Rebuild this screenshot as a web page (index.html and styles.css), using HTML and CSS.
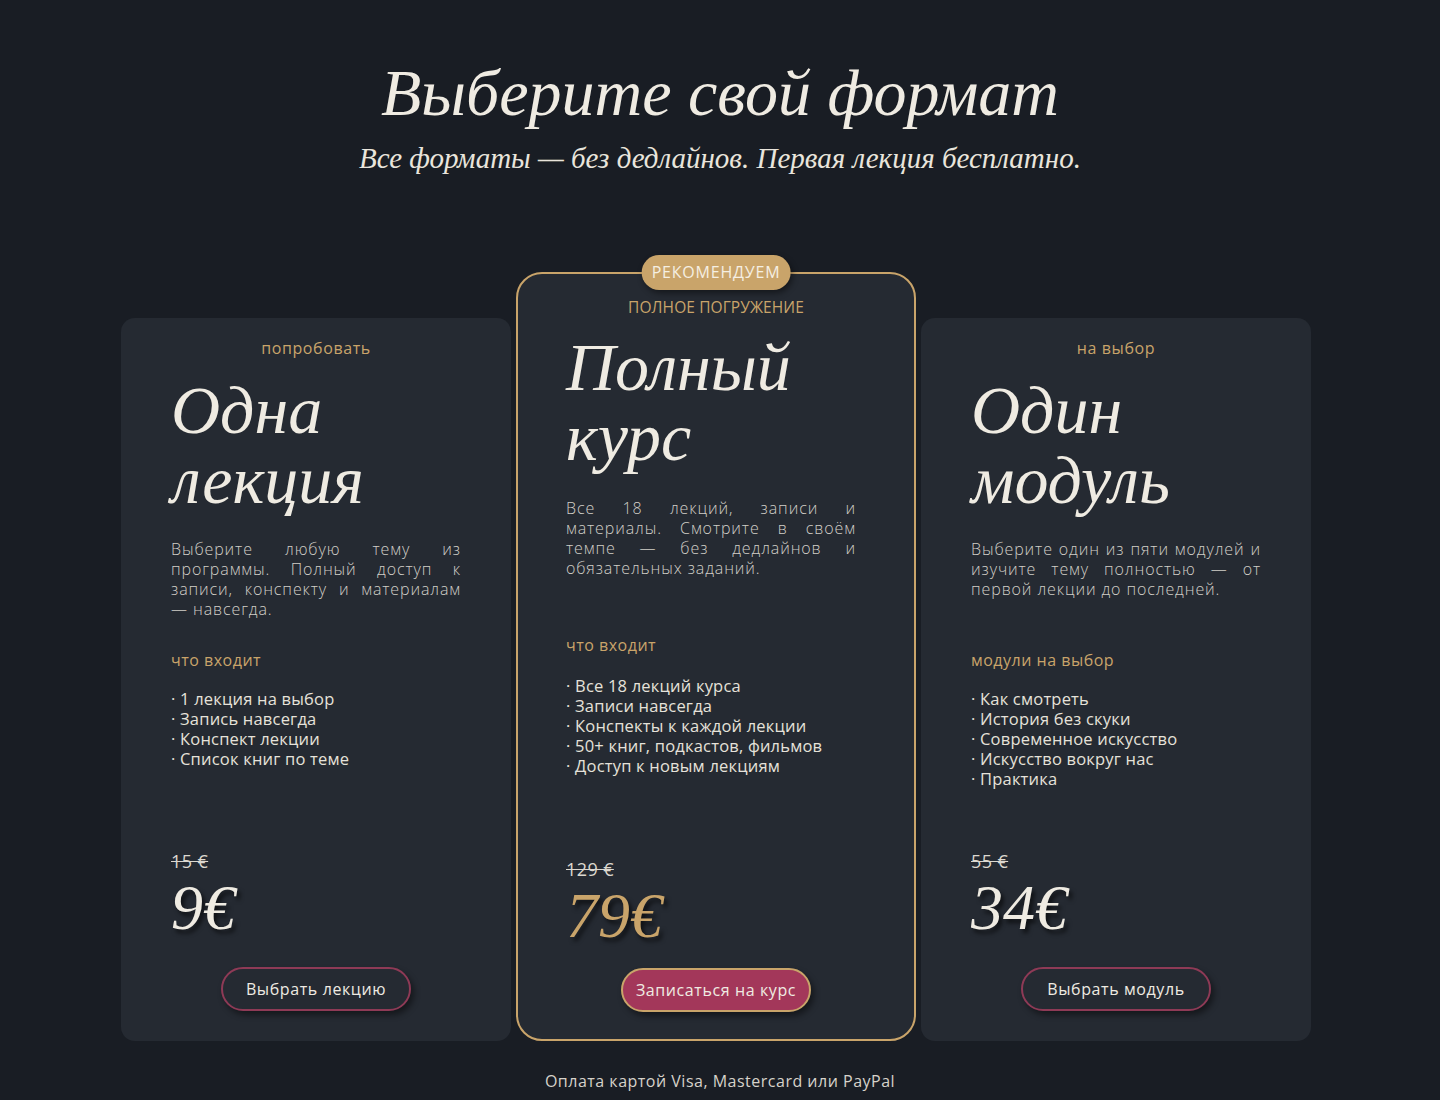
FILE: index.html
```html
<!DOCTYPE html>
<html lang="ru">
<head>
<meta charset="utf-8">
<title>Выберите свой формат</title>
<link rel="stylesheet" href="styles.css">
</head>
<body>
<main class="page">
  <header class="hero">
    <h1 class="hero-title">Выберите свой формат</h1>
    <p class="hero-sub">Все форматы — без дедлайнов. Первая лекция бесплатно.</p>
  </header>

  <section class="plans">
    <article class="plan">
      <div class="plan-kicker">попробовать</div>
      <h2 class="plan-title">Одна<br>лекция</h2>
      <p class="plan-desc">Выберите любую тему из программы. Полный доступ к записи, конспекту и материалам —&nbsp;навсегда.</p>
      <div class="plan-label">что входит</div>
      <ul class="plan-list">
        <li>· 1 лекция на выбор</li>
        <li>· Запись навсегда</li>
        <li>· Конспект лекции</li>
        <li>· Список книг по теме</li>
      </ul>
      <div class="plan-price">
        <div class="price-old">15 €</div>
        <div class="price-new">9€</div>
      </div>
      <div class="plan-action"><button class="btn">Выбрать лекцию</button></div>
    </article>

    <article class="plan plan-featured">
      <div class="badge">РЕКОМЕНДУЕМ</div>
      <div class="plan-kicker plan-kicker-upper">ПОЛНОЕ ПОГРУЖЕНИЕ</div>
      <h2 class="plan-title">Полный<br>курс</h2>
      <p class="plan-desc">Все 18 лекций, записи и материалы. Смотрите в своём темпе — без дедлайнов и обязательных заданий.</p>
      <div class="plan-label">что входит</div>
      <ul class="plan-list">
        <li>· Все 18 лекций курса</li>
        <li>· Записи навсегда</li>
        <li>· Конспекты к каждой лекции</li>
        <li>· 50+ книг, подкастов, фильмов</li>
        <li>· Доступ к новым лекциям</li>
      </ul>
      <div class="plan-price">
        <div class="price-old">129 €</div>
        <div class="price-new price-gold">79€</div>
      </div>
      <div class="plan-action"><button class="btn btn-primary">Записаться на курс</button></div>
    </article>

    <article class="plan">
      <div class="plan-kicker">на выбор</div>
      <h2 class="plan-title">Один<br>модуль</h2>
      <p class="plan-desc">Выберите один из пяти модулей и изучите тему полностью — от первой лекции до последней.</p>
      <div class="plan-label">модули на выбор</div>
      <ul class="plan-list">
        <li>· Как смотреть</li>
        <li>· История без скуки</li>
        <li>· Современное искусство</li>
        <li>· Искусство вокруг нас</li>
        <li>· Практика</li>
      </ul>
      <div class="plan-price">
        <div class="price-old">55 €</div>
        <div class="price-new">34€</div>
      </div>
      <div class="plan-action"><button class="btn">Выбрать модуль</button></div>
    </article>
  </section>

  <footer class="pay-note">Оплата картой Visa, Mastercard или PayPal</footer>
</main>
</body>
</html>
```

FILE: styles.css
```css
* { box-sizing: border-box; }

html, body {
  margin: 0;
  padding: 0;
  background: #191d24;
}

body {
  font-family: "Open Sans", "DejaVu Sans", sans-serif;
  color: #e8e4dc;
  height: 1100px;
  overflow: hidden;
}

.page {
  width: 100%;
  padding-top: 52px;
}

.hero {
  text-align: center;
}

.hero-title {
  margin: 0;
  font-family: "Liberation Serif", "DejaVu Serif", serif;
  font-style: italic;
  font-weight: 400;
  font-size: 66px;
  line-height: 82px;
  color: #efebe2;
}

.hero-sub {
  margin: 6px 0 0;
  font-family: "Liberation Serif", "DejaVu Serif", serif;
  font-style: italic;
  font-size: 29px;
  line-height: 36px;
  color: #e9e5dc;
}

.plans {
  display: flex;
  justify-content: center;
  align-items: stretch;
  gap: 5px;
  margin-top: 96px;
  padding-right: 8px;
}

.plan {
  position: relative;
  width: 390px;
  margin-top: 46px;
  padding: 20px 50px 30px;
  background: #252a32;
  border-radius: 14px;
  display: flex;
  flex-direction: column;
}

.plan-featured {
  width: 400px;
  min-height: 769px;
  margin-top: 0;
  padding: 23px 58px 27px 48px;
  border: 2px solid #c9a46a;
  border-radius: 26px;
}

.badge {
  position: absolute;
  top: -19px;
  left: 50%;
  transform: translateX(-50%);
  padding: 0 10px;
  height: 35px;
  line-height: 35px;
  border-radius: 18px;
  background: #c9a46a;
  color: #f5efe2;
  font-size: 16px;
  letter-spacing: 0.8px;
  white-space: nowrap;
  box-shadow: 2px 3px 6px rgba(0, 0, 0, 0.45);
}

.plan-kicker {
  text-align: center;
  font-size: 16px;
  line-height: 20px;
  letter-spacing: 0.6px;
  color: #c9a46a;
}

.plan-featured .plan-kicker {
  margin-left: 10px;
}

.plan-kicker-upper {
  font-size: 15.5px;
  letter-spacing: 0.1px;
}

.plan-title {
  margin: 17px 0 0;
  font-family: "Liberation Serif", "DejaVu Serif", serif;
  font-style: italic;
  font-weight: 400;
  font-size: 68px;
  line-height: 70px;
  color: #efebe2;
}

.plan-featured .plan-title {
  margin-top: 15px;
}

.plan-desc {
  margin: 24px 0 0;
  min-height: 80px;
  font-size: 16px;
  line-height: 20px;
  font-weight: 300;
  text-align: justify;
  color: #d2cfc8;
  letter-spacing: 0.9px;
}

.plan-featured .plan-desc {
  margin-top: 26px;
}

.plan-label {
  margin-top: 31px;
  font-size: 16px;
  line-height: 20px;
  letter-spacing: 0.5px;
  color: #c9a46a;
}

.plan-featured .plan-label {
  margin-top: 57px;
}

.plan-list {
  list-style: none;
  margin: 19px 0 0;
  padding: 0;
  font-size: 16.5px;
  line-height: 20px;
  color: #e6e2da;
  letter-spacing: 0.2px;
}

.plan-featured .plan-list {
  margin-top: 21px;
}

.plan-price {
  margin-top: auto;
}

.price-old {
  font-size: 18px;
  line-height: 22px;
  color: #dcd8d0;
  letter-spacing: 0.4px;
  text-decoration: line-through;
}

.price-new {
  margin-top: 8px;
  font-family: "Liberation Serif", "DejaVu Serif", serif;
  font-style: italic;
  font-size: 64px;
  line-height: 56px;
  color: #efebe2;
  text-shadow: 3px 4px 4px rgba(0, 0, 0, 0.6);
}

.price-gold {
  color: #c9a46a;
}

.plan-action {
  margin-top: 31px;
  display: flex;
  justify-content: center;
}

.plan-featured .plan-action {
  margin-top: 24px;
  margin-left: 10px;
}

.btn {
  width: 190px;
  height: 44px;
  border: 2px solid #8e3a56;
  border-radius: 22px;
  background: #252a32;
  color: #efebe2;
  font-family: "Open Sans", "DejaVu Sans", sans-serif;
  font-size: 16px;
  letter-spacing: 0.6px;
  box-shadow: 3px 4px 6px rgba(0, 0, 0, 0.45);
  cursor: pointer;
}

.btn-primary {
  background: #a3375a;
  border-color: #c9a46a;
}

.pay-note {
  margin-top: 30px;
  text-align: center;
  font-size: 16px;
  line-height: 20px;
  letter-spacing: 0.5px;
  color: #d6d2ca;
}
```
